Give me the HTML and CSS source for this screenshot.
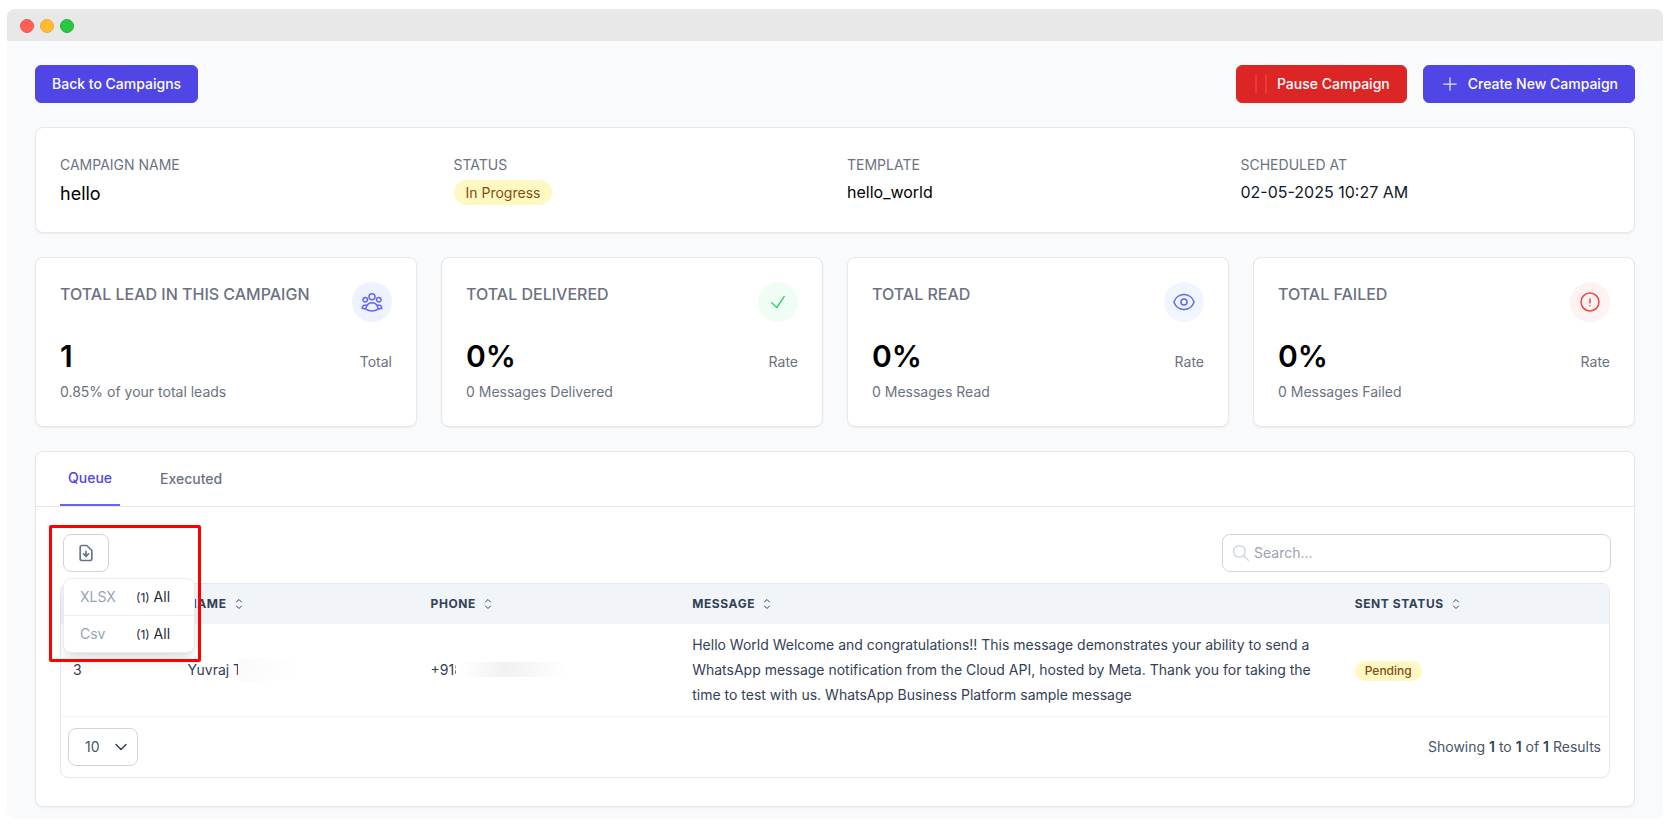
FILE: index.html
```html
<!DOCTYPE html>
<html lang="en">
<head>
<meta charset="utf-8">
<meta name="viewport" content="width=device-width, initial-scale=1">
<title>Campaign details</title>
<link rel="stylesheet" href="styles.css">
</head>
<body>
<svg class="sprite" aria-hidden="true">
  <symbol id="i-sort" viewBox="0 0 24 24"><path d="M8.25 15 12 18.75 15.75 15m-7.5-6L12 5.25 15.75 9"/></symbol>
</svg>
<div class="window">
  <header class="titlebar">
    <span class="dot dot-red"></span><span class="dot dot-yellow"></span><span class="dot dot-green"></span>
  </header>
  <main class="content">
    <div class="actions">
      <button class="btn btn-primary" type="button">Back to Campaigns</button>
      <div class="actions-right">
        <button class="btn btn-danger" type="button">
          <svg class="icon-pause" viewBox="0 0 16 20"><path d="M3 1v18M13 1v18"/></svg>
          Pause Campaign
        </button>
        <button class="btn btn-primary" type="button">
          <svg class="icon-20 icon-plus" viewBox="0 0 24 24"><path d="M12 4.5v15m7.5-7.5h-15"/></svg>
          Create New Campaign
        </button>
      </div>
    </div>

    <section class="card info">
      <div><div class="label">CAMPAIGN NAME</div><div class="value value-lg">hello</div></div>
      <div><div class="label">STATUS</div><span class="badge">In Progress</span></div>
      <div><div class="label">TEMPLATE</div><div class="value">hello_world</div></div>
      <div><div class="label">SCHEDULED AT</div><div class="value value-dark">02-05-2025 10:27 AM</div></div>
    </section>

    <section class="stats">
      <article class="card stat">
        <div class="stat-row stat-head">
          <h2 class="stat-title">TOTAL LEAD IN THIS CAMPAIGN</h2>
          <span class="bubble bubble-indigo"><svg class="icon-24" viewBox="0 0 24 24"><path d="M18 18.72a9.094 9.094 0 0 0 3.741-.479 3 3 0 0 0-4.682-2.72m.94 3.198.001.031c0 .225-.012.447-.037.666A11.944 11.944 0 0 1 12 21c-2.17 0-4.207-.576-5.963-1.584A6.062 6.062 0 0 1 6 18.719m12 0a5.971 5.971 0 0 0-.941-3.197m0 0A5.995 5.995 0 0 0 12 12.75a5.995 5.995 0 0 0-5.058 2.772m0 0a3 3 0 0 0-4.681 2.72 8.986 8.986 0 0 0 3.74.477m.94-3.197a5.971 5.971 0 0 0-.94 3.197M15 6.75a3 3 0 1 1-6 0 3 3 0 0 1 6 0Zm6 3a2.25 2.25 0 1 1-4.5 0 2.25 2.25 0 0 1 4.5 0Zm-13.5 0a2.25 2.25 0 1 1-4.5 0 2.25 2.25 0 0 1 4.5 0Z"/></svg></span>
        </div>
        <div class="stat-row stat-main"><strong class="number">1</strong><span class="muted">Total</span></div>
        <p class="muted stat-note">0.85% of your total leads</p>
      </article>
      <article class="card stat">
        <div class="stat-row stat-head">
          <h2 class="stat-title">TOTAL DELIVERED</h2>
          <span class="bubble bubble-green"><svg class="icon-20" viewBox="0 0 24 24"><path d="m4.5 12.75 6 6 9-13.5"/></svg></span>
        </div>
        <div class="stat-row stat-main"><strong class="number">0%</strong><span class="muted">Rate</span></div>
        <p class="muted stat-note">0 Messages Delivered</p>
      </article>
      <article class="card stat">
        <div class="stat-row stat-head">
          <h2 class="stat-title">TOTAL READ</h2>
          <span class="bubble bubble-blue"><svg class="icon-24" viewBox="0 0 24 24"><path d="M2.036 12.322a1.012 1.012 0 0 1 0-.639C3.423 7.51 7.36 4.5 12 4.5c4.638 0 8.573 3.007 9.963 7.178.07.207.07.431 0 .639C20.577 16.49 16.64 19.5 12 19.5c-4.638 0-8.573-3.007-9.963-7.178Z"/><path d="M15 12a3 3 0 1 1-6 0 3 3 0 0 1 6 0Z"/></svg></span>
        </div>
        <div class="stat-row stat-main"><strong class="number">0%</strong><span class="muted">Rate</span></div>
        <p class="muted stat-note">0 Messages Read</p>
      </article>
      <article class="card stat">
        <div class="stat-row stat-head">
          <h2 class="stat-title">TOTAL FAILED</h2>
          <span class="bubble bubble-red"><svg class="icon-24" viewBox="0 0 24 24"><path d="M12 9v3.75m9-.75a9 9 0 1 1-18 0 9 9 0 0 1 18 0Zm-9 3.75h.008v.008H12v-.008Z"/></svg></span>
        </div>
        <div class="stat-row stat-main"><strong class="number">0%</strong><span class="muted">Rate</span></div>
        <p class="muted stat-note">0 Messages Failed</p>
      </article>
    </section>

    <section class="card panel">
      <nav class="tabs">
        <button class="tab tab-active" type="button">Queue</button>
        <button class="tab" type="button">Executed</button>
      </nav>
      <div class="panel-body">
        <div class="toolbar">
          <div class="export">
            <button class="export-btn" type="button" aria-label="Export">
              <svg class="icon-20" viewBox="0 0 24 24"><path d="M12 10v6m0 0l-3-3m3 3l3-3m2 8H7a2 2 0 01-2-2V5a2 2 0 012-2h5.586a1 1 0 01.707.293l5.414 5.414a1 1 0 01.293.707V19a2 2 0 01-2 2z"/></svg>
            </button>
            <ul class="menu">
              <li><span class="format">XLSX</span><a class="all" href="#"><span class="count">(1)</span> All</a></li>
              <li><span class="format">Csv</span><a class="all" href="#"><span class="count">(1)</span> All</a></li>
            </ul>
          </div>
          <label class="search">
            <svg class="icon-20" viewBox="0 0 24 24"><path d="M21 21l-6-6m2-5a7 7 0 11-14 0 7 7 0 0114 0z"/></svg>
            <input type="text" placeholder="Search..." aria-label="Search">
          </label>
          <div class="highlight"></div>
        </div>

        <div class="table-box">
          <table>
            <colgroup><col class="c-id"><col class="c-name"><col class="c-phone"><col class="c-message"><col class="c-status"></colgroup>
            <thead>
              <tr>
                <th aria-label="Id"></th>
                <th><span class="th">NAME<svg class="icon-16"><use href="#i-sort"/></svg></span></th>
                <th><span class="th">PHONE<svg class="icon-16"><use href="#i-sort"/></svg></span></th>
                <th><span class="th">MESSAGE<svg class="icon-16"><use href="#i-sort"/></svg></span></th>
                <th><span class="th">SENT STATUS<svg class="icon-16"><use href="#i-sort"/></svg></span></th>
              </tr>
            </thead>
            <tbody>
              <tr>
                <td>3</td>
                <td><span class="masked">Yuvraj T<span class="smudge smudge-name"></span></span></td>
                <td><span class="masked">+918<span class="smudge smudge-phone"></span></span></td>
                <td>Hello World Welcome and congratulations!! This message demonstrates your ability to send a WhatsApp message notification from the Cloud API, hosted by Meta. Thank you for taking the time to test with us. WhatsApp Business Platform sample message</td>
                <td><span class="badge badge-sm">Pending</span></td>
              </tr>
            </tbody>
          </table>
          <footer class="table-foot">
            <div class="per-page">
              <select aria-label="Rows per page"><option>10</option><option>25</option><option>50</option></select>
              <svg class="icon-20" viewBox="0 0 20 20"><path d="M5 7.5l5 5 5-5"/></svg>
            </div>
            <div>Showing <b>1</b> to <b>1</b> of <b>1</b> Results</div>
          </footer>
        </div>
      </div>
    </section>
  </main>
</div>
</body>
</html>
```

FILE: styles.css
```css
*, *::before, *::after { box-sizing: border-box; }

body {
  margin: 0;
  padding: 9px 7px;
  background: #fff;
  color: #000;
  font-family: Inter, "Liberation Sans", sans-serif;
  font-size: 14px;
  line-height: 20px;
}

button, input, select { font: inherit; color: inherit; }
h2, p, ul { margin: 0; padding: 0; }

svg { fill: none; stroke: currentColor; stroke-width: 1.5; stroke-linecap: round; stroke-linejoin: round; flex: none; }
.sprite { position: absolute; width: 0; height: 0; }
.icon-16 { width: 16px; height: 16px; }
.icon-20 { width: 20px; height: 20px; }
.icon-24 { width: 24px; height: 24px; }

/* Window frame */
.window { border-radius: 8px; overflow: hidden; background: #f9fafc; }
.titlebar { display: flex; align-items: center; gap: 6px; height: 32px; padding: 2px 13px 0; background: #e8e8e8; }
.dot { width: 14px; height: 14px; border-radius: 50%; border: 1px solid; }
.dot-red { background: #ff5f57; border-color: #f4554e; }
.dot-yellow { background: #febc2e; border-color: #eda93a; }
.dot-green { background: #28c840; border-color: #22b53a; }
.content { display: flex; flex-direction: column; gap: 24px; padding: 24px 28px 12px; }

/* Buttons */
.actions, .actions-right { display: flex; align-items: center; gap: 16px; }
.actions { justify-content: space-between; }
.btn {
  display: flex; align-items: center; gap: 8px;
  padding: 8px 16px;
  border: 1px solid transparent; border-radius: 6px;
  color: #fff; font-weight: 500;
  cursor: pointer;
}
.btn-primary { background: #4f46e5; border-color: #4f46e5; }
.btn-danger { background: #dc2626; border-color: #dc2626; box-shadow: 0 1px 2px rgba(0, 0, 0, .05); }
.icon-plus { color: #e0e7ff; }
.icon-pause { width: 16px; height: 20px; color: #e63c3c; stroke-width: 2; stroke-linecap: butt; }

/* Cards */
.card { background: #fff; border: 1px solid #e5e7eb; border-radius: 8px; box-shadow: 0 1px 2px rgba(0, 0, 0, .06); }

.info { display: grid; grid-template-columns: repeat(4, 1fr); gap: 24px; padding: 27px 24px 24px; }
.label { margin-bottom: 5px; color: #6b7280; }
.value { font-size: 16px; line-height: 24px; }
.value-lg { font-size: 18px; line-height: 28px; }
.value-dark { color: #111827; }
.badge { display: inline-block; padding: 3px 12px 2px; border-radius: 13px; background: #fef9c3; color: #854d0e; }
.badge-sm { padding: 2px 10px; font-size: 12px; line-height: 16px; font-weight: 500; vertical-align: middle; }

.stats { display: grid; grid-template-columns: repeat(4, 1fr); gap: 24px; }
.stat { padding: 24px; }
.stat-row { display: flex; justify-content: space-between; }
.stat-head { align-items: flex-start; }
.stat-main { align-items: baseline; margin: 16px 0 8px; }
.stat-title { font-size: 16px; line-height: 24px; font-weight: 500; color: #6b7280; }
.number { font-size: 30px; line-height: 36px; font-weight: 600; }
.muted { color: #6b7280; }
.bubble { display: flex; align-items: center; justify-content: center; width: 40px; height: 40px; border-radius: 50%; }
.bubble-indigo { background: #eef2ff; color: #6366f1; }
.bubble-green { background: #f0fdf4; color: #22c55e; }
.bubble-blue { background: #eff6ff; color: #6366f1; }
.bubble-red { background: #fef2f2; color: #ef4444; }

/* Tabs */
.tabs { display: flex; align-items: center; gap: 32px; padding: 0 24px; border-bottom: 1px solid #e5e7eb; }
.tab { padding: 16px 8px; border: 0; background: none; color: #6b7280; font-weight: 500; cursor: pointer; }
.tab-active { border-bottom: 2px solid #6366f1; color: #4f46e5; }
.panel-body { padding: 27px 24px 28px; }

/* Toolbar */
.toolbar { position: relative; display: flex; justify-content: space-between; margin: 0 -1px 11px 3px; }
.export { position: relative; }
.export-btn {
  display: flex; align-items: center; justify-content: center;
  width: 46px; height: 38px; padding: 0;
  border: 1px solid #d1d5db; border-radius: 8px;
  background: #fff; color: #64748b; cursor: pointer;
}
.export-btn svg { stroke-width: 2; }
.menu {
  position: absolute; top: 44px; left: 0; z-index: 2;
  width: 132px; list-style: none;
  border: 1px solid #e9ecf0; border-radius: 8px; background: #fff;
  box-shadow: 0 10px 15px -3px rgba(0, 0, 0, .1), 0 4px 6px -4px rgba(0, 0, 0, .1);
}
.menu li { display: flex; align-items: center; height: 36px; padding: 0 16px; }
.menu li + li { height: 37px; border-top: 1px solid #eef0f3; }
.format { width: 56px; color: #94a3b8; }
.all { color: #1f2937; text-decoration: none; }
.count { font-size: 12px; }
.highlight {
  position: absolute; top: -9px; left: -14px; z-index: 3;
  width: 152px; height: 137px;
  border: 3px solid #f00; border-radius: 2px;
  pointer-events: none;
}
.search {
  display: flex; align-items: center; gap: 3px;
  width: 389px; max-width: 60%; height: 38px; padding: 0 8px;
  border: 1px solid #d1d5db; border-radius: 8px;
  color: #cbd5e1;
}
.search input { flex: 1; min-width: 0; padding: 0; border: 0; outline: 0; background: none; color: #334155; }
.search input::placeholder { color: #9ca3af; opacity: 1; }

/* Table */
.table-box { border: 1px solid #e2e8f0; border-radius: 8px; overflow: hidden; }
table { width: 100%; table-layout: fixed; border-collapse: collapse; color: #334155; }
.c-id { width: 7.4%; }
.c-name { width: 15.7%; }
.c-phone { width: 16.9%; }
.c-message { width: 42.8%; }
.c-status { width: 17.2%; }
thead { background: #f1f5f9; }
th { height: 40px; padding: 0 12px; text-align: left; font-size: 12px; line-height: 16px; font-weight: 700; letter-spacing: .05em; }
.th { display: flex; align-items: center; gap: 4px; }
td { padding: 8px 12px 9px; line-height: 25px; vertical-align: middle; border-bottom: 1px solid #f1f5f9; }
.masked { position: relative; }
.smudge { position: absolute; }
.smudge-name { left: 50px; top: -2px; width: 78px; height: 22px; background: linear-gradient(100deg, #fafafa, #fbfbfb 20%, #fff 80%); }
.smudge-phone { left: 25px; top: 1px; width: 122px; height: 15px; background: linear-gradient(95deg, #fff 3%, #f1f1f1 40%, #fff 90%); }

.table-foot { display: flex; align-items: center; justify-content: space-between; padding: 11px 8px 11px 7px; color: #475569; }
.table-foot b { font-weight: 600; color: #334155; }
.per-page { display: grid; align-items: center; width: 70px; }
.per-page > * { grid-area: 1 / 1; }
.per-page select {
  appearance: none;
  width: 100%; height: 38px; padding: 0 32px 0 16px;
  border: 1px solid #d1d5db; border-radius: 8px; background: #fff;
}
.per-page svg { justify-self: end; margin-right: 7px; pointer-events: none; color: #334155; }
```
